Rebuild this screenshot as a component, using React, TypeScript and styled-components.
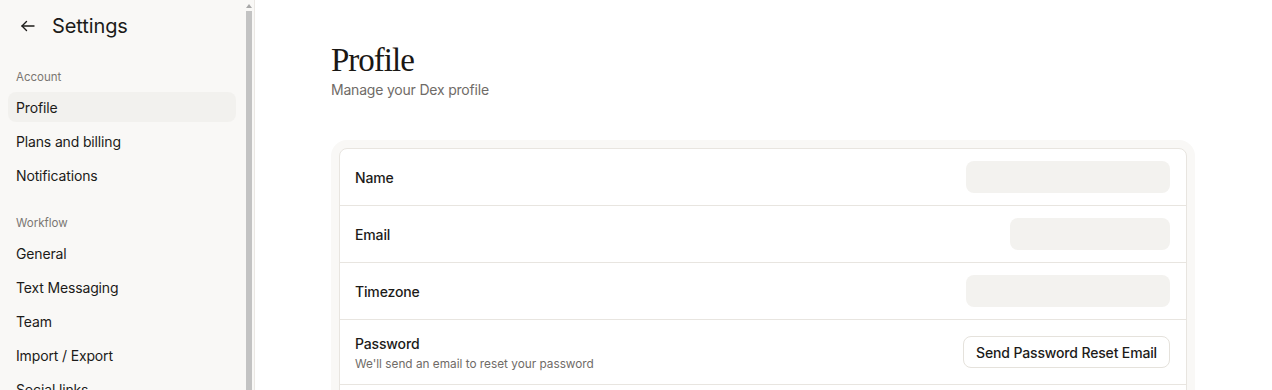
import React from 'react'
import styled, { createGlobalStyle } from 'styled-components'

const GlobalStyle = createGlobalStyle`
  html, body {
    margin: 0;
    padding: 0;
    height: 100%;
    overflow: hidden;
    background: #ffffff;
  }
  body {
    font-family: Inter, "Noto Sans", sans-serif;
    color: #1c1b19;
    -webkit-font-smoothing: antialiased;
  }
  * { box-sizing: border-box; }
`

const Layout = styled.div`
  display: flex;
  height: 100vh;
`

const Sidebar = styled.aside`
  width: 255px;
  flex-shrink: 0;
  height: 100%;
  display: flex;
  overflow: hidden;
  background: #f9f8f6;
  border-right: 1px solid #ebe8e4;
`

const SidebarScroll = styled.div`
  flex: 1;
  height: 100%;
  overflow: hidden;
  padding: 0 8px 20px 8px;
`

// drawn stand-in for the sidebar's classic scrollbar
const ScrollTrack = styled.div`
  width: 10px;
  flex-shrink: 0;
  display: flex;
  flex-direction: column;
  align-items: center;
  padding-top: 4px;
  gap: 3px;
`

const ScrollArrow = styled.div`
  width: 0;
  height: 0;
  border-left: 3.5px solid transparent;
  border-right: 3.5px solid transparent;
  border-bottom: 4px solid #a8a8a8;
`

const ScrollThumb = styled.div`
  width: 6px;
  flex: 1;
  background: #c3c3c3;
`

const SidebarHeader = styled.div`
  display: flex;
  align-items: center;
  gap: 12px;
  height: 52px;
  padding-left: 8px;
`

const BackButton = styled.button`
  display: flex;
  align-items: center;
  justify-content: center;
  width: 24px;
  height: 24px;
  padding: 0;
  border: none;
  background: transparent;
  color: #1c1b19;
  cursor: pointer;
`

const SidebarTitle = styled.h1`
  margin: 0;
  font-size: 20px;
  font-weight: 400;
  letter-spacing: -0.1px;
`

const SectionLabel = styled.div<{ $first?: boolean }>`
  font-size: 11.5px;
  color: #7a7672;
  padding: 0 8px;
  margin-top: ${p => (p.$first ? '16px' : '24px')};
  margin-bottom: 6px;
  line-height: 18px;
`

const NavList = styled.nav`
  display: flex;
  flex-direction: column;
  gap: 4px;
`

const NavItem = styled.a<{ $active?: boolean }>`
  display: flex;
  align-items: center;
  height: 30px;
  padding: 0 8px;
  border-radius: 8px;
  font-size: 14px;
  letter-spacing: -0.15px;
  color: #1c1b19;
  text-decoration: none;
  background: ${p => (p.$active ? '#f2f1ee' : 'transparent')};
  cursor: pointer;
`

const Main = styled.main`
  flex: 1;
  display: flex;
  justify-content: center;
  padding-top: 40px;
  padding-right: 1px;
`

const Content = styled.div`
  width: 864px;
`

const PageTitle = styled.h2`
  margin: 0;
  font-family: "Liberation Serif", "DejaVu Serif", serif;
  font-size: 33px;
  font-weight: 400;
  letter-spacing: -1px;
  line-height: 40px;
  color: #1a1714;
`

const PageSubtitle = styled.p`
  margin: 0;
  font-size: 14px;
  letter-spacing: -0.2px;
  color: #6f6b67;
  line-height: 20px;
`

const CardShell = styled.div`
  margin-top: 40px;
  padding: 8px;
  background: #f9f8f6;
  border-radius: 16px;
`

const Card = styled.div`
  background: #ffffff;
  border: 1px solid #e8e5e0;
  border-radius: 8px;
`

const Row = styled.div<{ $tall?: boolean }>`
  display: flex;
  align-items: center;
  justify-content: space-between;
  padding: 0 16px 0 15px;
  height: ${p => (p.$tall ? '65px' : '57px')};
  border-bottom: 1px solid #e8e5e0;
`

const LabelGroup = styled.div`
  display: flex;
  flex-direction: column;
  gap: 5px;
  padding-top: 1px;
`

const RowLabel = styled.span`
  font-size: 14px;
  font-weight: 500;
  letter-spacing: -0.15px;
  color: #1c1b19;
`

const RowHint = styled.span`
  font-size: 11.8px;
  color: #6f6b67;
`

const FieldPlaceholder = styled.div<{ $width: number }>`
  width: ${p => p.$width}px;
  height: 32px;
  border-radius: 8px;
  background: #f3f2ef;
`

const OutlineButton = styled.button`
  height: 32px;
  padding: 0 12px;
  border: 1px solid #e5e2dc;
  border-radius: 8px;
  background: #ffffff;
  font-family: Inter, "Noto Sans", sans-serif;
  font-size: 14px;
  font-weight: 500;
  letter-spacing: -0.15px;
  color: #1c1b19;
  cursor: pointer;
`

const accountItems = ['Profile', 'Plans and billing', 'Notifications']
const workflowItems = ['General', 'Text Messaging', 'Team', 'Import / Export', 'Social links']

export default function App() {
  return (
    <>
      <GlobalStyle />
      <Layout>
        <Sidebar>
          <SidebarScroll>
            <SidebarHeader>
              <BackButton aria-label="Back">
                <svg width="16" height="16" viewBox="0 0 16 16" fill="none" stroke="currentColor" strokeWidth="1.4" strokeLinecap="round" strokeLinejoin="round">
                  <path d="M14 8H2" />
                  <path d="M6.5 3.5L2 8l4.5 4.5" />
                </svg>
              </BackButton>
              <SidebarTitle>Settings</SidebarTitle>
            </SidebarHeader>

            <SectionLabel $first>Account</SectionLabel>
            <NavList>
              {accountItems.map(item => (
                <NavItem key={item} $active={item === 'Profile'}>{item}</NavItem>
              ))}
            </NavList>

            <SectionLabel>Workflow</SectionLabel>
            <NavList>
              {workflowItems.map(item => (
                <NavItem key={item}>{item}</NavItem>
              ))}
            </NavList>
          </SidebarScroll>
          <ScrollTrack>
            <ScrollArrow />
            <ScrollThumb />
          </ScrollTrack>
        </Sidebar>

        <Main>
          <Content>
            <PageTitle>Profile</PageTitle>
            <PageSubtitle>Manage your Dex profile</PageSubtitle>

            <CardShell>
              <Card>
                <Row>
                  <RowLabel>Name</RowLabel>
                  <FieldPlaceholder $width={204} />
                </Row>
                <Row>
                  <RowLabel>Email</RowLabel>
                  <FieldPlaceholder $width={160} />
                </Row>
                <Row>
                  <RowLabel>Timezone</RowLabel>
                  <FieldPlaceholder $width={204} />
                </Row>
                <Row $tall>
                  <LabelGroup>
                    <RowLabel>Password</RowLabel>
                    <RowHint>We'll send an email to reset your password</RowHint>
                  </LabelGroup>
                  <OutlineButton>Send Password Reset Email</OutlineButton>
                </Row>
                <Row>
                  <RowLabel>Delete account</RowLabel>
                </Row>
              </Card>
            </CardShell>
          </Content>
        </Main>
      </Layout>
    </>
  )
}
